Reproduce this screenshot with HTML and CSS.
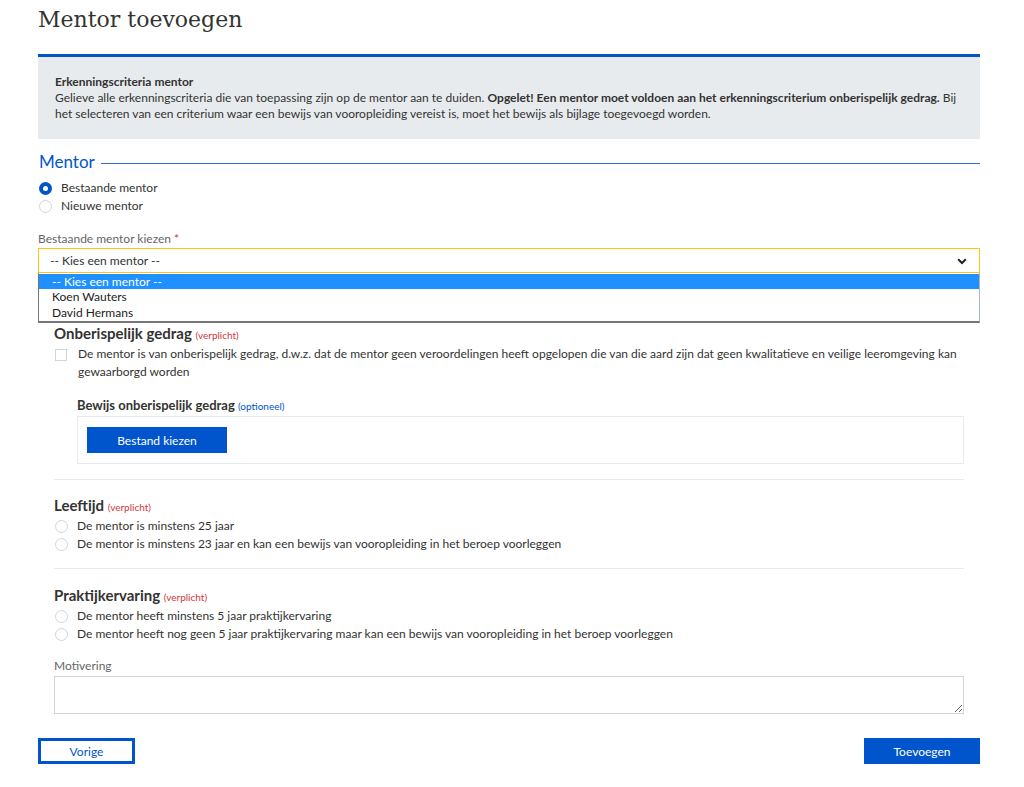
FILE: index.html
```html
<!DOCTYPE html>
<html lang="nl">
<head>
<meta charset="utf-8">
<title>Mentor toevoegen</title>
<link rel="stylesheet" href="styles.css">
</head>
<body>
<main class="page">
  <h1 class="title">Mentor toevoegen</h1>

  <section class="info">
    <p class="info-title">Erkenningscriteria mentor</p>
    <p class="info-text">Gelieve alle erkenningscriteria die van toepassing zijn op de mentor aan te duiden. <strong>Opgelet! Een mentor moet voldoen aan het erkenningscriterium onberispelijk gedrag.</strong> <span>Bij</span><br><span>het selecteren van een criterium waar een bewijs van vooropleiding vereist is, moet het bewijs als bijlage toegevoegd worden.</span></p>
  </section>

  <section class="group">
    <h2 class="legend"><span>Mentor</span></h2>
    <div class="options">
      <label class="option"><span class="radio checked"></span>Bestaande mentor</label>
      <label class="option"><span class="radio"></span>Nieuwe mentor</label>
    </div>

    <div class="field">
      <div class="field-label">Bestaande mentor kiezen <span class="req">*</span></div>
      <div class="select-wrap">
        <div class="select">
          <span>-- Kies een mentor --</span>
          <svg class="chev" width="10" height="7" viewBox="0 0 10 7"><path d="M1.2 1.3 L5 5 L8.8 1.3" fill="none" stroke="#222" stroke-width="2"/></svg>
        </div>
        <ul class="dropdown">
          <li class="active">-- Kies een mentor --</li>
          <li>Koen Wauters</li>
          <li>David Hermans</li>
        </ul>
      </div>
    </div>
  </section>

  <section class="criteria">
    <div class="criterion crit-first">
      <h3 class="crit-title">Onberispelijk gedrag <span class="mandatory">(verplicht)</span></h3>
      <label class="check-row"><span class="checkbox"></span><span>De mentor is van onberispelijk gedrag, d.w.z. dat de mentor geen veroordelingen heeft opgelopen die van die aard zijn dat geen kwalitatieve en veilige leeromgeving kan gewaarborgd worden</span></label>
      <div class="upload">
        <h4 class="upload-title">Bewijs onberispelijk gedrag <span class="optional">(optioneel)</span></h4>
        <div class="upload-box"><button class="btn btn-primary btn-file" type="button">Bestand kiezen</button></div>
      </div>
    </div>

    <div class="criterion crit-second">
      <h3 class="crit-title">Leeftijd <span class="mandatory">(verplicht)</span></h3>
      <label class="option"><span class="radio"></span>De mentor is minstens 25 jaar</label>
      <label class="option"><span class="radio"></span>De mentor is minstens 23 jaar en kan een bewijs van vooropleiding in het beroep voorleggen</label>
    </div>

    <div class="criterion crit-last">
      <h3 class="crit-title">Praktijkervaring <span class="mandatory">(verplicht)</span></h3>
      <label class="option"><span class="radio"></span>De mentor heeft minstens 5 jaar praktijkervaring</label>
      <label class="option"><span class="radio"></span>De mentor heeft nog geen 5 jaar praktijkervaring maar kan een bewijs van vooropleiding in het beroep voorleggen</label>
    </div>

    <div class="motivation">
      <div class="field-label">Motivering</div>
      <textarea class="textarea"></textarea>
    </div>
  </section>

  <div class="actions">
    <button class="btn btn-outline" type="button">Vorige</button>
    <button class="btn btn-primary btn-add" type="button">Toevoegen</button>
  </div>
</main>
</body>
</html>
```

FILE: styles.css
```css
* { box-sizing: border-box; }
html, body { margin: 0; padding: 0; background: #fff; }
body {
  font-family: "Lato", "Open Sans", sans-serif;
  font-size: 12px;
  color: #333332;
}
.page {
  width: 942px;
  margin-left: 38px;
  padding-top: 5px;
}
.title {
  margin: 0 0 19px;
  font-family: "DejaVu Serif", serif;
  font-weight: normal;
  font-size: 22px;
  line-height: 30px;
  color: #333332;
}
.info {
  border-top: 3px solid #0055cc;
  background: #e8ebee;
  padding: 17px 17px;
  min-height: 84px;
}
.info p { margin: 0; line-height: 16px; }
.info-title { font-weight: bold; }
.info strong { font-weight: bold; }

.group { margin-top: 12px; }
.legend {
  margin: 0;
  display: flex;
  align-items: center;
  gap: 6px;
  font-weight: normal;
  font-size: 17px;
  line-height: 22px;
  color: #0055cc;
  padding-left: 1px;
}
.legend::after {
  content: "";
  flex: 1;
  height: 1px;
  background: #2a6fd0;
  margin-top: 2px;
}
.options { margin-top: 6px; }
.option {
  display: flex;
  align-items: center;
  gap: 9px;
  line-height: 18px;
  color: #333332;
}
.radio {
  width: 13px;
  height: 13px;
  border-radius: 50%;
  border: 1px solid #cfd5dc;
  background: #fff;
  flex: none;
  margin-left: 1px;
}
.radio.checked {
  border: 4px solid #0055cc;
  background: #fff;
}
.field { margin-top: 15px; }
.field-label { line-height: 18px; color: #666; }
.req { color: #d2373c; }
.select-wrap { position: relative; }
.select {
  height: 25px;
  border: 1px solid #ffc515;
  background: #fff;
  display: flex;
  align-items: center;
  justify-content: space-between;
  padding: 0 12px 0 11px;
  color: #333332;
}
.chev { margin-top: 1px; }
.dropdown {
  position: absolute;
  left: 0;
  right: 0;
  top: 100%;
  margin: 0;
  padding: 1px 0 1px;
  list-style: none;
  background: #fff;
  border: 1px solid #767676;
  border-top: none;
  border-right-color: #a9b7c9;
  border-bottom-width: 2px;
  z-index: 10;
}
.dropdown li {
  height: 15.3px;
  line-height: 15px;
  padding-left: 13px;
  color: #222;
}
.dropdown li.active { background: #1e90ff; color: #fff; }

.criteria {
  margin-top: 50px;
  padding: 0 16px;
}
.criterion { border-bottom: 1px solid #e8ebee; }
.crit-first { padding-bottom: 15px; margin-bottom: 16px; }
.crit-second { padding-bottom: 15px; margin-bottom: 17px; }
.crit-last { border-bottom: none; margin-bottom: 14px; }
.crit-title {
  margin: 0;
  font-size: 15px;
  line-height: 20px;
  font-weight: bold;
  color: #333332;
}
.crit-second .crit-title, .crit-last .crit-title { line-height: 19px; }
.mandatory { font-size: 10px; font-weight: normal; color: #d2373c; }
.optional { font-size: 10px; font-weight: normal; color: #0055cc; }
.check-row {
  display: flex;
  align-items: flex-start;
  gap: 11px;
  line-height: 18px;
}
.checkbox {
  width: 12px;
  height: 12px;
  border: 1px solid #cfd5dc;
  background: #fff;
  flex: none;
  margin-top: 4px;
  margin-left: 1px;
}
.upload { padding-left: 23px; margin-top: 15px; }
.upload-title {
  margin: 0;
  font-size: 13px;
  line-height: 19px;
  font-weight: bold;
  color: #333332;
}
.upload-box {
  border: 1px solid #e8ebee;
  padding: 10px 9px;
}
.btn {
  font-family: inherit;
  font-size: 12px;
  height: 26px;
  cursor: pointer;
  border: none;
}
.btn-primary { background: #0055cc; color: #fff; }
.btn-file { width: 140px; }
.textarea {
  display: block;
  width: 100%;
  height: 38px;
  margin-top: 1px;
  border: 1px solid #cfd5dc;
  resize: vertical;
  font-family: inherit;
}
.actions {
  margin-top: 24px;
  display: flex;
  justify-content: space-between;
}
.btn-outline {
  width: 97px;
  background: #fff;
  border: 3px solid #0055cc;
  color: #0055cc;
}
.btn-add { width: 116px; }
```
